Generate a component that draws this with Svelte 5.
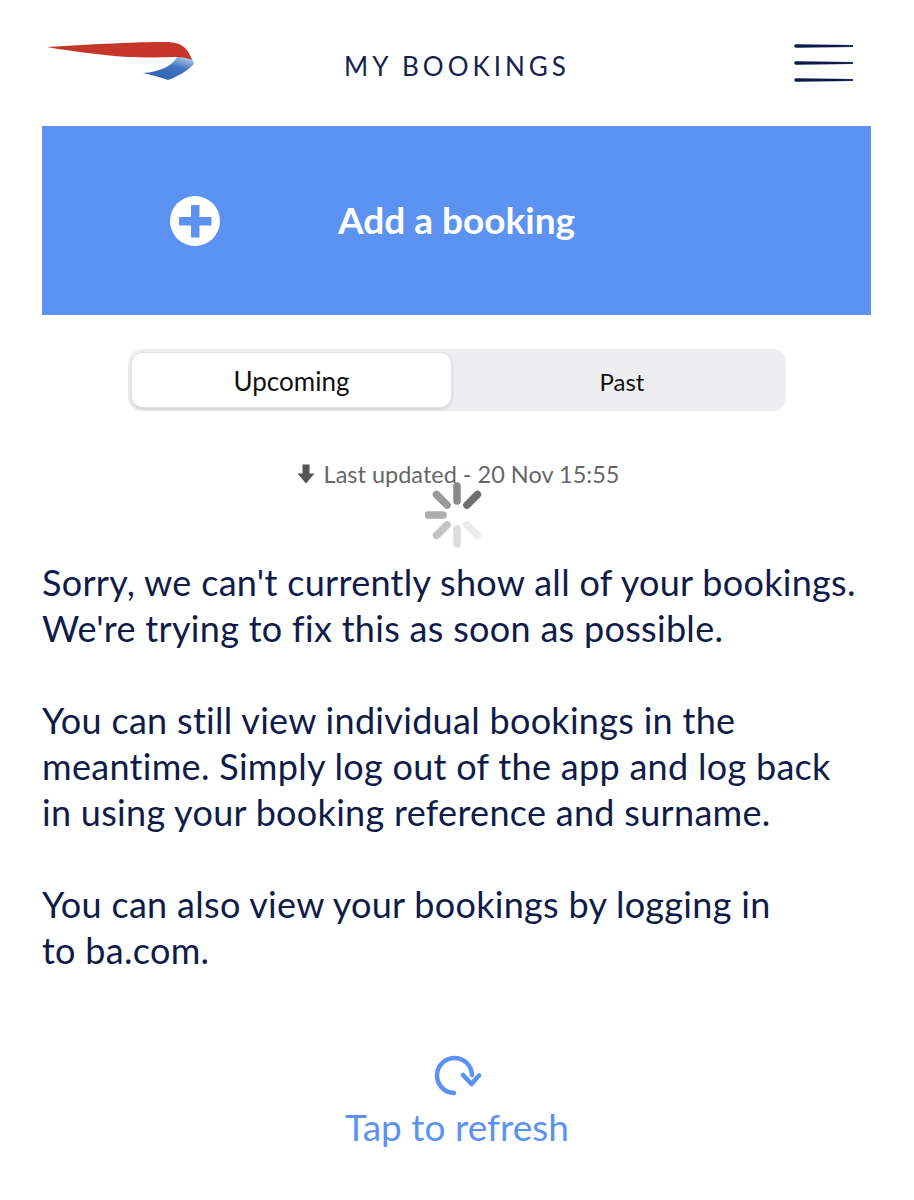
<script>
  const spokes = [
    { a: 0, c: '#8a8a8a' },
    { a: 45, c: '#6f6f6f' },
    { a: 135, c: '#ececec' },
    { a: 180, c: '#dcdcdc' },
    { a: 225, c: '#c4c4c4' },
    { a: 270, c: '#adadad' },
    { a: 315, c: '#9a9a9a' }
  ];
</script>

<div class="page">
  <header class="top">
    <svg class="logo" width="152" height="42" viewBox="0 0 152 42" aria-label="British Airways">
      <defs>
        <linearGradient id="blue" x1="0.2" y1="1" x2="0.85" y2="0">
          <stop offset="0" stop-color="#2f62ad" />
          <stop offset="0.6" stop-color="#3f74c4" />
          <stop offset="1" stop-color="#b4cbec" />
        </linearGradient>
      </defs>
      <path d="M133 18 C139 18 145 19 149 21 L150 25 C143 32 135 37 124 41 C116 38 108 36 99 34 C116 33 128 27 133 18Z" fill="url(#blue)" />
      <path d="M3 8 C50 5 95 3 122 3 C134 3 143 6 148 21 C143 19 138 18 130 18 C100 19 80 18 70 17 C45 14 25 12 3 8Z" fill="#c5352a" />
    </svg>
    <h1 class="title">MY BOOKINGS</h1>
    <svg class="menu" width="60" height="40" viewBox="0 0 60 40" aria-label="Menu">
      <defs>
        <linearGradient id="fade" x1="0" y1="0" x2="1" y2="0">
          <stop offset="0" stop-color="#0b1a48" />
          <stop offset="0.7" stop-color="#0b1a48" />
          <stop offset="1" stop-color="#24325f" />
        </linearGradient>
      </defs>
      <path d="M2 1.2 L59 2 L59 4 L2 4.8 A1.8 1.8 0 0 1 2 1.2Z" fill="url(#fade)" />
      <path d="M2 18.2 L59 19 L59 21 L2 21.8 A1.8 1.8 0 0 1 2 18.2Z" fill="url(#fade)" />
      <path d="M2 35.2 L59 36 L59 38 L2 38.8 A1.8 1.8 0 0 1 2 35.2Z" fill="url(#fade)" />
    </svg>
  </header>

  <button class="add">
    <svg class="plus" width="50" height="50" viewBox="0 0 50 50" aria-hidden="true">
      <circle cx="25" cy="25" r="25" fill="#fff" />
      <path d="M21 9 H29.5 V21 H41.5 V29.5 H29.5 V41.5 H21 V29.5 H9 V21 H21Z" fill="#5c93f3" />
    </svg>
    <span>Add a booking</span>
  </button>

  <div class="seg">
    <div class="opt active">Upcoming</div>
    <div class="opt past">Past</div>
  </div>

  <div class="status">
    <div class="updated">
      <svg width="18" height="22" viewBox="0 0 18 21" aria-hidden="true">
        <path d="M5.5 1 H12.5 V10 H17.5 L9 20 L0.5 10 H5.5Z" fill="#555" />
      </svg>
      <span>Last updated - 20 Nov 15:55</span>
    </div>
    <svg class="spinner" width="64" height="68" viewBox="-32 -34 64 68" aria-hidden="true">
      {#each spokes as s}
        <line x1="0" y1="-14" x2="0" y2="-29" stroke={s.c} stroke-width="7.5" stroke-linecap="round" transform="rotate({s.a})" />
      {/each}
    </svg>
  </div>

  <main class="msg">
    <p>Sorry, we can't currently show all of your bookings.<br />We're trying to fix this as soon as possible.</p>
    <p>You can still view individual bookings in the<br />meantime. Simply log out of the app and log back<br />in using your booking reference and surname.</p>
    <p>You can also view your bookings by logging in<br />to ba.com.</p>
  </main>

  <button class="refresh">
    <svg width="50" height="42" viewBox="0 0 50 42" aria-hidden="true">
      <path d="M22 39 A17.5 17.5 0 1 1 40 21" fill="none" stroke="#5c93f3" stroke-width="4.5" stroke-linecap="round" />
      <path d="M31 21 L39.5 30 L47 21.5" fill="none" stroke="#5c93f3" stroke-width="4.5" stroke-linecap="round" stroke-linejoin="round" />
    </svg>
    <span>Tap to refresh</span>
  </button>
</div>

<style>
  :global(body) {
    margin: 0;
    background: #fff;
  }
  .page {
    width: 914px;
    height: 1200px;
    box-sizing: border-box;
    padding: 0 42px;
    font-family: Lato, "Open Sans", sans-serif;
    color: #0f1c49;
    overflow: hidden;
    font-variant-ligatures: none;
  }
  .top {
    height: 126px;
    display: grid;
    grid-template-columns: 1fr auto 1fr;
    align-items: center;
  }
  .logo {
    margin-left: 2px;
    position: relative;
    top: -3px;
  }
  .title {
    margin: 6px 0 0;
    font-size: 26px;
    font-weight: 400;
    letter-spacing: 4px;
    color: #15224f;
    line-height: 1;
  }
  .menu {
    justify-self: end;
    margin: 4px 18px 0 0;
    position: relative;
    top: -2px;
  }
  button {
    border: 0;
    padding: 0;
    background: none;
    font-family: inherit;
    display: block;
  }
  .add {
    width: 829px;
    height: 189px;
    background: #5c93f3;
    color: #fff;
    display: flex;
    align-items: center;
    padding: 0 0 2px 128px;
    box-sizing: border-box;
    font-size: 37px;
    font-weight: 700;
    font-variant-ligatures: none;
  }
  .plus {
    margin: 2px 118px 0 0;
  }
  .seg {
    width: 658px;
    height: 62px;
    margin: 34px 0 0 86px;
    background: #eeeef0;
    border-radius: 14px;
    display: grid;
    grid-template-columns: 319px 1fr;
    font-size: 26px;
    color: #111;
    padding: 4px;
    box-sizing: border-box;
  }
  .opt {
    display: flex;
    align-items: center;
    justify-content: center;
    padding-top: 2px;
  }
  .past {
    font-size: 24px;
    padding-left: 11px;
  }
  .active {
    background: #fff;
    border-radius: 11px;
    box-shadow: 0 0 0 1px #e2e2e4, 0 2px 4px rgba(0, 0, 0, 0.16);
  }
  .status {
    position: relative;
    margin-top: 46px;
    height: 34px;
    display: flex;
    justify-content: center;
    padding-left: 2px;
    font-size: 23.5px;
    color: #666;
  }
  .updated {
    display: flex;
    align-items: center;
    gap: 9px;
    line-height: 34px;
  }
  .spinner {
    position: absolute;
    left: 383px;
    top: 24px;
  }
  .msg {
    margin-top: 68px;
    font-size: 36px;
    line-height: 46px;
    letter-spacing: 0.3px;
  }
  .msg p {
    margin: 0 0 46px;
  }
  .refresh {
    margin: 81px auto 0;
    display: flex;
    flex-direction: column;
    align-items: center;
    gap: 9px;
    color: #5c93f3;
    font-size: 37px;
    line-height: 44px;
    font-variant-ligatures: none;
  }
</style>
